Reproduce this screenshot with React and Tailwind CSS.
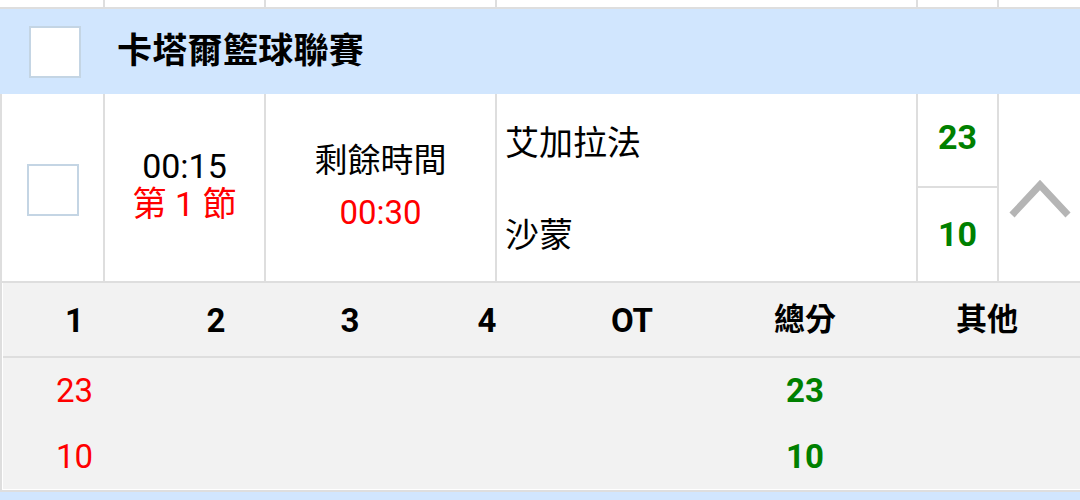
import React from "react";

const font = { fontFamily: 'Roboto, "Noto Sans CJK TC", "Noto Sans", sans-serif' };

function Checkbox() {
  return <div className="w-[52px] h-[52px] bg-white border-2 border-[#c4d5e4]" />;
}

export default function App() {
  return (
    <div className="w-[1080px] h-[500px] overflow-hidden bg-white text-black" style={font}>
      {/* previous row tail */}
      <div className="grid grid-cols-[105px_161px_231px_421px_81px_1fr] h-[9px] border-b-2 border-[#dedede]">
        <div className="border-r-2 border-[#dedede]" />
        <div className="border-r-2 border-[#dedede]" />
        <div className="border-r-2 border-[#dedede]" />
        <div className="border-r-2 border-[#dedede]" />
        <div className="border-r-2 border-[#dedede]" />
        <div />
      </div>

      {/* league header */}
      <div className="h-[85px] bg-[#d1e6fe] flex items-center pl-[29px]">
        <Checkbox />
        <div className="ml-[36px] text-[35px] font-bold leading-none tracking-[0.3px]">卡塔爾籃球聯賽</div>
      </div>

      {/* match row */}
      <div className="grid grid-cols-[103px_161px_231px_421px_81px_1fr] h-[189px] border-l-2 border-b-2 border-[#dedede]">
        <div className="border-r-2 border-[#dedede] flex items-center pl-[25px] pt-[5px]">
          <Checkbox />
        </div>
        <div className="border-r-2 border-[#dedede] flex flex-col items-center justify-center pb-[6px]">
          <div className="text-[34px] leading-[38px]">00:15</div>
          <div className="text-[34px] leading-[38px] text-[#ff0000]">第 1 節</div>
        </div>
        <div className="border-r-2 border-[#dedede] flex flex-col items-center justify-center gap-[14px] pb-[2px]">
          <div className="text-[33px] leading-[38px]">剩餘時間</div>
          <div className="text-[33px] leading-[38px] text-[#ff0000]">00:30</div>
        </div>
        <div className="border-r-2 border-[#dedede] flex flex-col">
          <div className="flex-1 flex items-center pl-[8px] pt-[4px] text-[34px]">艾加拉法</div>
          <div className="flex-1 flex items-center pl-[8px] text-[34px]">沙蒙</div>
        </div>
        <div className="border-r-2 border-[#dedede] flex flex-col">
          <div className="h-[94px] border-b-2 border-[#dedede] flex items-center justify-center pb-[6px] text-[34px] font-bold text-[#008000]">23</div>
          <div className="flex-1 flex items-center justify-center text-[34px] font-bold text-[#008000]">10</div>
        </div>
        <div className="flex items-center justify-center pt-[22px]">
          <svg width="62" height="44" viewBox="0 0 62 44">
            <polyline points="3,38 31,8 59,38" fill="none" stroke="#b5b5b5" strokeWidth="7" />
          </svg>
        </div>
      </div>

      {/* details */}
      <div className="border-l-2 border-b-2 border-[#dedede]">
        <div className="bg-[#f2f2f2] border-l border-b border-white">
          <div className="grid grid-cols-[143px_140px_128px_146px_144px_202px_1fr] h-[75px] items-center border-b-2 border-[#dedede] text-[33px] font-bold text-center pt-[2px]">
            <div>1</div>
            <div>2</div>
            <div>3</div>
            <div>4</div>
            <div>OT</div>
            <div className="text-[31px]">總分</div>
            <div className="text-[31px] pr-[12px]">其他</div>
          </div>
          <div className="grid grid-cols-[143px_140px_128px_146px_144px_202px_1fr] h-[66px] items-center text-[33px] text-center">
            <div className="text-[#ff0000]">23</div>
            <div />
            <div />
            <div />
            <div />
            <div className="font-bold text-[#008000]">23</div>
            <div />
          </div>
          <div className="grid grid-cols-[143px_140px_128px_146px_144px_202px_1fr] h-[65px] items-center text-[33px] text-center">
            <div className="text-[#ff0000]">10</div>
            <div />
            <div />
            <div />
            <div />
            <div className="font-bold text-[#008000]">10</div>
            <div />
          </div>
        </div>
      </div>
      <div className="h-[10px] bg-[#d1e6fe]" />
    </div>
  );
}
